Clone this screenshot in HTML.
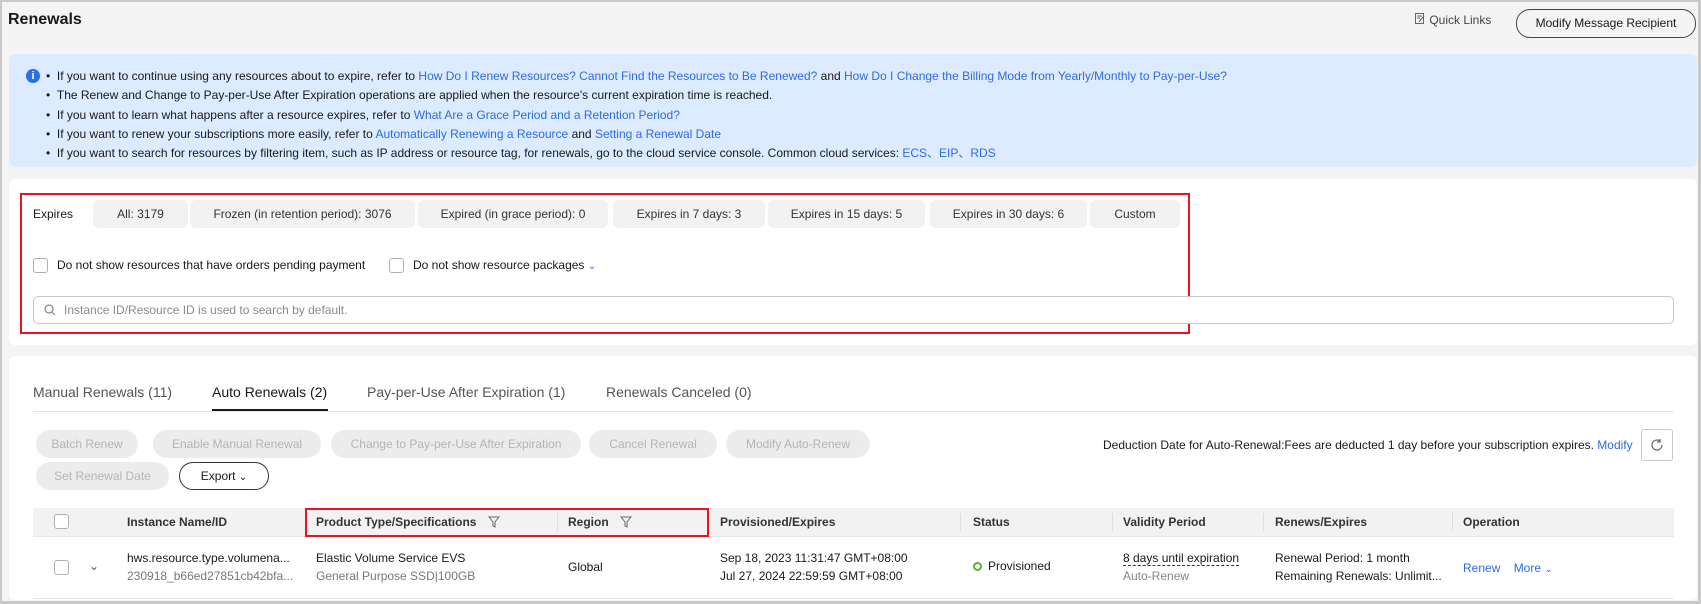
<!DOCTYPE html>
<html><head><meta charset="utf-8"><style>
*{box-sizing:border-box;margin:0;padding:0}
body{width:1701px;height:604px;background:#f4f4f4;font-family:"Liberation Sans",Arial,sans-serif;font-size:13px;color:#191919;position:relative;overflow:hidden;border:2px solid #c8c8c8;border-right:3px solid #c8c8c8;border-bottom:3px solid #c8c8c8}
.a{position:absolute;white-space:nowrap}
a,.lk{color:#2e6be6;text-decoration:none}
.chip{position:absolute;top:198px;height:28px;background:#f2f2f2;border-radius:6px;color:#333;text-align:center;line-height:28px;font-size:12px}
.btn{position:absolute;height:28px;border-radius:14px;background:#ececec;color:#b4b4b4;text-align:center;line-height:28px;font-size:12px}
.cb{position:absolute;width:15px;height:15px;border:1px solid #b0b0b0;border-radius:3px;background:#fff}
.th{position:absolute;top:513px;font-weight:bold;color:#333;font-size:12px}
.sep{position:absolute;top:511px;width:1px;height:18px;background:#ddd}
</style></head><body>
<div class="a" style="left:6px;top:9px;font-size:16px;font-weight:bold">Renewals</div>
<div class="a" style="left:1413px;top:11px;color:#444;font-size:12px">
<svg width="11" height="12" viewBox="0 0 11 12" style="vertical-align:-1px"><rect x="0.5" y="0.5" width="8" height="10" fill="none" stroke="#666"/><path d="M2 3h5M2 5h3M4 9l5-6" stroke="#666" fill="none"/></svg> Quick Links</div>
<div class="a" style="left:1514px;top:7px;width:180px;height:29px;border:1px solid #444;border-radius:14px;text-align:center;line-height:27px;font-size:12px">Modify Message Recipient</div>

<div class="a" style="left:7px;top:52px;width:1688px;height:113px;background:#dcebff;border-radius:6px"></div>
<div class="a" style="left:24px;top:67px;width:14px;height:14px;border-radius:50%;background:#2e6be6;color:#fff;font-size:11px;font-weight:bold;text-align:center;line-height:14px">i</div>
<div class="a" style="left:44px;top:65px;line-height:19.3px;font-size:12px">
• &nbsp;If you want to continue using any resources about to expire, refer to <a>How Do I Renew Resources? Cannot Find the Resources to Be Renewed?</a> and <a>How Do I Change the Billing Mode from Yearly/Monthly to Pay-per-Use?</a><br>
• &nbsp;The Renew and Change to Pay-per-Use After Expiration operations are applied when the resource's current expiration time is reached.<br>
• &nbsp;If you want to learn what happens after a resource expires, refer to <a>What Are a Grace Period and a Retention Period?</a><br>
• &nbsp;If you want to renew your subscriptions more easily, refer to <a>Automatically Renewing a Resource</a> and <a>Setting a Renewal Date</a><br>
• &nbsp;If you want to search for resources by filtering item, such as IP address or resource tag, for renewals, go to the cloud service console. Common cloud services: <a>ECS、EIP、RDS</a></div>

<div class="a" style="left:7px;top:177px;width:1688px;height:166px;background:#fff;border-radius:6px"></div>
<div class="a" style="left:18px;top:191px;width:1170px;height:141px;border:2px solid #e8141e"></div>
<div class="a" style="left:31px;top:205px;font-size:12px">Expires</div>
<div class="chip" style="left:91px;width:95px">All: 3179</div>
<div class="chip" style="left:188px;width:225px">Frozen (in retention period): 3076</div>
<div class="chip" style="left:416px;width:190px">Expired (in grace period): 0</div>
<div class="chip" style="left:611px;width:152px">Expires in 7 days: 3</div>
<div class="chip" style="left:766px;width:157px">Expires in 15 days: 5</div>
<div class="chip" style="left:928px;width:157px">Expires in 30 days: 6</div>
<div class="chip" style="left:1088px;width:90px">Custom</div>
<div class="cb" style="left:31px;top:256px"></div>
<div class="a" style="left:55px;top:256px;font-size:12px">Do not show resources that have orders pending payment</div>
<div class="cb" style="left:387px;top:256px"></div>
<div class="a" style="left:411px;top:256px;font-size:12px">Do not show resource packages <span class="lk" style="font-size:10px">&#8964;</span></div>
<div class="a" style="left:31px;top:294px;width:1641px;height:28px;border:1px solid #c8c8c8;border-radius:5px;background:#fff"></div>
<svg class="a" style="left:42px;top:302px" width="12" height="12" viewBox="0 0 12 12"><circle cx="5" cy="5" r="4" fill="none" stroke="#888" stroke-width="1.2"/><path d="M8 8l3 3" stroke="#888" stroke-width="1.2"/></svg>
<div class="a" style="left:62px;top:301px;color:#8a8a8a;font-size:12px">Instance ID/Resource ID is used to search by default.</div>

<div class="a" style="left:7px;top:354px;width:1688px;height:244px;background:#fff;border-radius:6px"></div>
<div class="a" style="left:31px;top:382px;font-size:14px;color:#555">Manual Renewals (11)</div>
<div class="a" style="left:210px;top:382px;font-size:14px;color:#191919">Auto Renewals (2)</div>
<div class="a" style="left:210px;top:407px;width:116px;height:2px;background:#191919"></div>
<div class="a" style="left:365px;top:382px;font-size:14px;color:#555">Pay-per-Use After Expiration (1)</div>
<div class="a" style="left:604px;top:382px;font-size:14px;color:#555">Renewals Canceled (0)</div>
<div class="a" style="left:31px;top:409px;width:1641px;height:1px;background:#e6e6e6"></div>

<div class="btn" style="left:34px;top:428px;width:102px">Batch Renew</div>
<div class="btn" style="left:151px;top:428px;width:168px">Enable Manual Renewal</div>
<div class="btn" style="left:329px;top:428px;width:250px">Change to Pay-per-Use After Expiration</div>
<div class="btn" style="left:587px;top:428px;width:128px">Cancel Renewal</div>
<div class="btn" style="left:724px;top:428px;width:144px">Modify Auto-Renew</div>
<div class="btn" style="left:34px;top:460px;width:133px">Set Renewal Date</div>
<div class="btn" style="left:177px;top:460px;width:90px;background:#fff;border:1px solid #333;color:#191919;line-height:26px">Export <span style="font-size:10px">&#8964;</span></div>
<div class="a" style="left:1101px;top:436px;font-size:12px">Deduction Date for Auto-Renewal:Fees are deducted 1 day before your subscription expires. <span class="lk">Modify</span></div>
<div class="a" style="left:1639px;top:427px;width:32px;height:32px;border:1px solid #c8c8c8;border-radius:3px"></div>
<svg class="a" style="left:1648px;top:436px" width="14" height="14" viewBox="0 0 14 14"><path d="M12 7A5 5 0 1 1 10 3" fill="none" stroke="#666" stroke-width="1.2"/><path d="M10 1v3h-3" fill="none" stroke="#666" stroke-width="1.2"/></svg>

<div class="a" style="left:31px;top:506px;width:1641px;height:29px;background:#f2f2f2;border-bottom:1px solid #e6e6e6"></div>
<div class="cb" style="left:52px;top:512px"></div>
<div class="th" style="left:125px">Instance Name/ID</div>
<div class="th" style="left:314px">Product Type/Specifications <svg width="12" height="12" viewBox="0 0 12 12" style="vertical-align:-2px;margin-left:8px"><path d="M1 1h10L7 6v5l-2-1V6z" fill="none" stroke="#666"/></svg></div>
<div class="sep" style="left:555px"></div>
<div class="th" style="left:566px">Region <svg width="12" height="12" viewBox="0 0 12 12" style="vertical-align:-2px;margin-left:8px"><path d="M1 1h10L7 6v5l-2-1V6z" fill="none" stroke="#666"/></svg></div>
<div class="th" style="left:718px">Provisioned/Expires</div>
<div class="sep" style="left:958px"></div>
<div class="th" style="left:971px">Status</div>
<div class="sep" style="left:1110px"></div>
<div class="th" style="left:1121px">Validity Period</div>
<div class="sep" style="left:1261px"></div>
<div class="th" style="left:1273px">Renews/Expires</div>
<div class="sep" style="left:1450px"></div>
<div class="th" style="left:1461px">Operation</div>
<div class="a" style="left:303px;top:506px;width:404px;height:29px;border:2px solid #e8141e"></div>

<div class="cb" style="left:52px;top:558px"></div>
<div class="a" style="left:87px;top:557px;color:#555;font-size:12px">&#8964;</div>
<div class="a" style="left:125px;top:549px;font-size:12px">hws.resource.type.volumena...</div>
<div class="a" style="left:125px;top:567px;font-size:12px;color:#777">230918_b66ed27851cb42bfa...</div>
<div class="a" style="left:314px;top:549px;font-size:12px">Elastic Volume Service EVS</div>
<div class="a" style="left:314px;top:567px;font-size:12px;color:#777">General Purpose SSD|100GB</div>
<div class="a" style="left:566px;top:558px;font-size:12px">Global</div>
<div class="a" style="left:718px;top:549px;font-size:12px">Sep 18, 2023 11:31:47 GMT+08:00</div>
<div class="a" style="left:718px;top:567px;font-size:12px">Jul 27, 2024 22:59:59 GMT+08:00</div>
<div class="a" style="left:971px;top:560px;width:9px;height:9px;border:2px solid #5cb32a;border-radius:50%"></div>
<div class="a" style="left:986px;top:557px;font-size:12px">Provisioned</div>
<div class="a" style="left:1121px;top:549px;font-size:12px;border-bottom:1px dashed #333">8 days until expiration</div>
<div class="a" style="left:1121px;top:567px;font-size:12px;color:#888">Auto-Renew</div>
<div class="a" style="left:1273px;top:549px;font-size:12px">Renewal Period: 1 month</div>
<div class="a" style="left:1273px;top:567px;font-size:12px">Remaining Renewals: Unlimit...</div>
<div class="a lk" style="left:1461px;top:559px;font-size:12px">Renew &nbsp;&nbsp; More <span style="font-size:10px">&#8964;</span></div>
<div class="a" style="left:31px;top:596px;width:1641px;height:1px;background:#e6e6e6"></div>
</body></html>
